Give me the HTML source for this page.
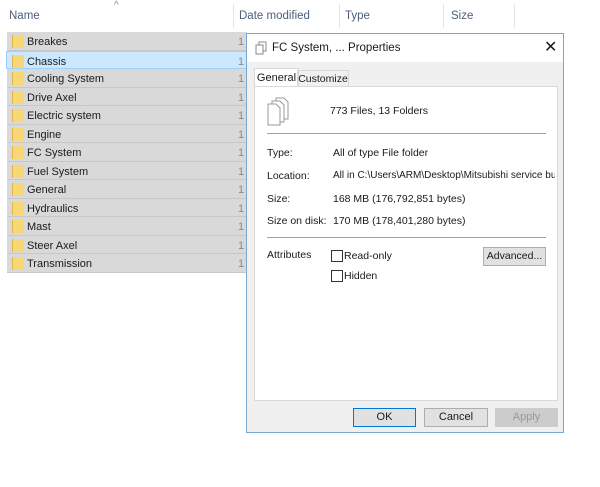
<!DOCTYPE html><html><head><style>
body{margin:0;width:600px;height:487px;background:#fff;font-family:"Liberation Sans",sans-serif;font-size:11px;color:#1a1a1a;position:relative;overflow:hidden}
.a{position:absolute}
.hd{color:#4c607a;font-size:11.5px;top:10px}
.sep{top:4px;width:1px;height:24px;background:#e5e5e5}
.row{left:7px;width:240px;height:17.5px;background:#d9d9d9;border-bottom:1px solid #c8c8c8}
.row .f{position:absolute;left:5px;top:3px;width:11px;height:13px;background:#f8d775;border-left:1px solid #e0b54a}
.row span{position:absolute;left:20px;top:4px;font-size:11px}
.row i{position:absolute;left:231px;top:4px;font-style:normal;color:#888}
.btn{height:17px;border:1px solid #adadad;background:#e1e1e1;text-align:center;line-height:17px;font-size:11px}
.cb{width:10px;height:10px;border:1px solid #333;background:#fff}
</style></head><body>
<div class="a hd" style="left:9px">Name</div>
<div class="a" style="left:114px;top:0;color:#888;font-size:10px">^</div>
<div class="a sep" style="left:233px"></div>
<div class="a hd" style="left:239px">Date modified</div>
<div class="a sep" style="left:339px"></div>
<div class="a hd" style="left:345px">Type</div>
<div class="a sep" style="left:443px"></div>
<div class="a hd" style="left:451px">Size</div>
<div class="a sep" style="left:514px"></div>

<div class="a row" style="top:32px"><div class="f"></div><span>Breakes</span><i>1</i></div>
<div class="a row" style="top:50.5px;background:#cce8ff;border:1px solid #99d1ff;left:6px;height:16.5px"><div class="f"></div><span>Chassis</span><i>1</i></div>
<div class="a row" style="top:69px"><div class="f"></div><span>Cooling System</span><i>1</i></div>
<div class="a row" style="top:87.5px"><div class="f"></div><span>Drive Axel</span><i>1</i></div>
<div class="a row" style="top:106px"><div class="f"></div><span>Electric system</span><i>1</i></div>
<div class="a row" style="top:124.5px"><div class="f"></div><span>Engine</span><i>1</i></div>
<div class="a row" style="top:143px"><div class="f"></div><span>FC System</span><i>1</i></div>
<div class="a row" style="top:161.5px"><div class="f"></div><span>Fuel System</span><i>1</i></div>
<div class="a row" style="top:180px"><div class="f"></div><span>General</span><i>1</i></div>
<div class="a row" style="top:198.5px"><div class="f"></div><span>Hydraulics</span><i>1</i></div>
<div class="a row" style="top:217px"><div class="f"></div><span>Mast</span><i>1</i></div>
<div class="a row" style="top:235.5px"><div class="f"></div><span>Steer Axel</span><i>1</i></div>
<div class="a row" style="top:254px"><div class="f"></div><span>Transmission</span><i>1</i></div>

<div class="a" style="left:246px;top:33px;width:318px;height:400px;background:#f0f0f0;border:1px solid #7aa7d2;box-sizing:border-box">
 <div class="a" style="left:0;top:0;width:316px;height:28px;background:#fff"></div>
 <svg class="a" style="left:8px;top:7px" width="12" height="14"><rect x="4" y="1" width="7" height="9" fill="#fff" stroke="#888"/><rect x="1" y="4" width="7" height="9" fill="#fff" stroke="#888"/></svg>
 <div class="a" style="left:25px;top:8px;font-size:11.5px">FC System, ... Properties</div>
 <div class="a" style="left:297px;top:3px;font-size:16px">✕</div>
 <div class="a" style="left:7px;top:34px;width:43px;height:19px;background:#fff;border:1px solid #d9d9d9;border-bottom:none;text-align:center;line-height:18px">General</div>
 <div class="a" style="left:50px;top:36px;width:50px;height:16px;border:1px solid #d9d9d9;border-bottom:none;text-align:center;line-height:16px;font-size:10.5px">Customize</div>
 <div class="a" style="left:7px;top:52px;width:302px;height:313px;background:#fff;border:1px solid #d9d9d9">
  <svg class="a" style="left:12px;top:10px" width="26" height="30"><path d="M9 1h8l4 4v17H9z" fill="#fff" stroke="#999"/><path d="M5 4h8l4 4v17H5z" fill="#fff" stroke="#999"/><path d="M1 7h8l4 4v17H1z" fill="#fff" stroke="#999"/></svg>
  <div class="a" style="left:75px;top:18px;font-size:10.5px">773 Files, 13 Folders</div>
  <div class="a" style="left:12px;top:46px;width:279px;height:1px;background:#a0a0a0"></div>
  <div class="a" style="left:12px;top:60px;font-size:10.5px">Type:</div><div class="a" style="left:78px;top:60px;font-size:10.5px">All of type File folder</div>
  <div class="a" style="left:12px;top:83px;font-size:10.5px">Location:</div><div class="a" style="left:78px;top:83px;white-space:nowrap;width:222px;overflow:hidden;font-size:10px">All in C:\Users\ARM\Desktop\Mitsubishi service bulle</div>
  <div class="a" style="left:12px;top:106px;font-size:10.5px">Size:</div><div class="a" style="left:78px;top:106px;font-size:10.5px">168 MB (176,792,851 bytes)</div>
  <div class="a" style="left:12px;top:128px;font-size:10.5px">Size on disk:</div><div class="a" style="left:78px;top:128px;font-size:10.5px">170 MB (178,401,280 bytes)</div>
  <div class="a" style="left:12px;top:150px;width:279px;height:1px;background:#a0a0a0"></div>
  <div class="a" style="left:12px;top:162px;font-size:10.5px">Attributes</div>
  <div class="a cb" style="left:76px;top:163px"></div><div class="a" style="left:89px;top:163px;font-size:10.5px">Read-only</div>
  <div class="a cb" style="left:76px;top:183px"></div><div class="a" style="left:89px;top:183px;font-size:10.5px">Hidden</div>
  <div class="a btn" style="left:228px;top:160px;width:61px;font-size:10.5px">Advanced...</div>
 </div>
 <div class="a btn" style="left:106px;top:374px;width:61px;border:1px solid #0078d7">OK</div>
 <div class="a btn" style="left:177px;top:374px;width:62px">Cancel</div>
 <div class="a btn" style="left:248px;top:374px;width:61px;color:#999;border-color:#ccc;background:#ccc">Apply</div>
</div>
</body></html>
